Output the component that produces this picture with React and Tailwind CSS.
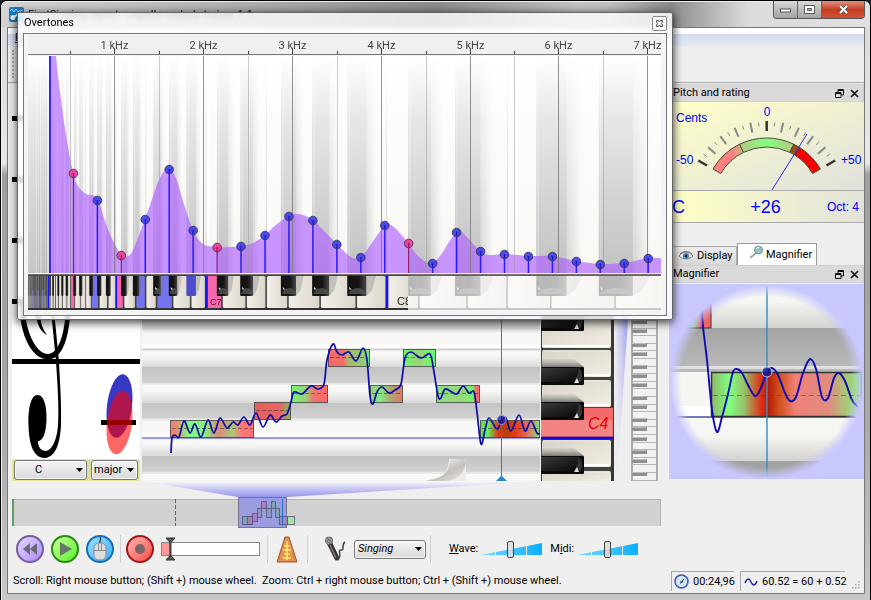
import { useState } from 'react';

const BLACK = [1, 3, 6, 8, 10];
const isBlack = (m) => BLACK.includes(m % 12);

// Harmonic amplitudes, index 0 is the second partial
const PARTIALS = [173, 200, 255, 219, 169, 230, 247, 246, 235, 216, 220, 244, 257, 225, 243, 263, 232, 251, 254, 256, 256, 261, 264, 263, 258];

const OUTLINE = [
  [56, 56], [60, 92], [66, 135], [73, 172], [78, 186], [86, 194], [97, 199], [109, 232], [121, 255], [126, 257], [133, 250],
  [145, 219], [157, 185], [164, 171], [169, 169], [176, 178], [184, 204], [193, 230], [203, 244], [217, 247], [229, 247], [241, 246],
  [253, 243], [265, 235], [277, 224], [289, 216], [296, 214], [303, 215], [313, 220], [325, 232], [337, 244], [348, 255], [356, 259],
  [361, 258], [367, 250], [385, 225], [391, 225], [398, 231], [408, 243], [418, 256], [428, 263], [433, 262], [440, 256], [456, 232],
  [463, 233], [480, 251], [490, 255], [504, 254], [528, 256], [552, 256], [576, 261], [600, 264], [624, 263], [648, 258], [661, 258],
];

const MELODY = [
  [171, 453], [172, 438], [175, 435], [179, 437], [184, 421], [190, 433], [195, 424], [201, 437], [208, 420], [214, 433],
  [220, 418], [227, 428], [233, 422], [238, 425], [244, 417], [250, 425], [256, 413], [263, 427], [270, 415], [276, 422],
  [282, 416], [287, 414], [291, 402], [294, 392], [302, 394], [311, 386], [318, 389], [324, 384], [327, 360], [333, 344],
  [337, 352], [342, 355], [349, 352], [356, 361], [363, 348], [367, 360], [370, 396], [373, 404], [377, 392], [382, 387],
  [389, 393], [395, 390], [401, 384], [405, 358], [411, 352], [421, 358], [430, 354], [434, 372], [438, 396], [441, 398],
  [445, 389], [452, 392], [457, 394], [463, 386], [469, 393], [474, 392], [477, 412], [481, 444], [485, 430], [489, 418],
  [497, 429], [502, 420], [506, 418], [511, 431], [519, 415], [525, 431], [531, 421], [537, 433], [540, 434],
];

const MAGNIFIED = [
  [33, 26], [34, 43], [38, 76], [43, 126], [48, 148], [53, 133], [59, 110], [64, 88], [68, 85], [73, 89], [79, 101], [86, 112],
  [91, 106], [98, 89], [103, 84], [109, 91], [116, 109], [121, 117], [127, 113], [134, 89], [141, 75], [147, 85], [153, 113],
  [159, 114], [165, 94], [170, 89], [176, 97], [183, 116], [189, 123],
];

const NOTES = [
  { x: 170, w: 84, y: 420, stops: [[0, '#ff7878'], [0.08, '#e09070'], [0.22, '#80ff80'], [0.42, '#88f080'], [0.58, '#e08878'], [0.75, '#a8c878'], [0.85, '#ff7878'], [1, '#ff7070']] },
  { x: 254, w: 37, y: 402, stops: [[0, '#e86060'], [0.7, '#e86464'], [0.9, '#a0a060'], [1, '#90b060']] },
  { x: 291, w: 37, y: 385, stops: [[0, '#70f870'], [0.4, '#98d078'], [0.6, '#f07870'], [1, '#ff6868']] },
  { x: 328, w: 42, y: 349, stops: [[0, '#f86868'], [0.38, '#f07068'], [0.48, '#a8b870'], [0.8, '#98c870'], [1, '#70e870']] },
  { x: 370, w: 33, y: 385, stops: [[0, '#90d078'], [0.3, '#80f080'], [0.6, '#b0a870'], [1, '#e07868']] },
  { x: 403, w: 33, y: 349, stops: [[0, '#68f868'], [0.5, '#a0d078'], [0.8, '#70f870'], [1, '#70f070']] },
  { x: 436, w: 44, y: 385, stops: [[0, '#88e080'], [0.6, '#98d878'], [0.85, '#70f870'], [0.9, '#f07070'], [1, '#ff6868']] },
  { x: 480, w: 60, y: 420, stops: [[0, '#70d060'], [0.12, '#60f860'], [0.3, '#d83818'], [0.45, '#b84008'], [0.6, '#e83818'], [0.8, '#e07060'], [1, '#88e078']] },
];

// Catmull-Rom spline through the points
function spline(points) {
  let d = `M${points[0][0]} ${points[0][1]}`;
  for (let i = 0; i < points.length - 1; i++) {
    const p0 = points[i - 1] || points[i];
    const p1 = points[i];
    const p2 = points[i + 1];
    const p3 = points[i + 2] || p2;
    d += ` C${p1[0] + (p2[0] - p0[0]) / 6} ${p1[1] + (p2[1] - p0[1]) / 6} ${p2[0] - (p3[0] - p1[0]) / 6} ${p2[1] - (p3[1] - p1[1]) / 6} ${p2[0]} ${p2[1]}`;
  }
  return d;
}

const freqX = (hz) => 25.5 + hz * 0.0888;
const midiX = (m) => freqX(440 * Math.pow(2, (m - 69) / 12));

const RANGE = Array.from({ length: 97 }, (_, i) => i + 21);
const PINK_KEYS = [72, 84, 96];
const BLUE_KEYS = [79, 88, 91, 94];

function whiteKeySpan(m) {
  return [isBlack(m - 1) ? midiX(m - 1) : midiX(m - 0.5), isBlack(m + 1) ? midiX(m + 1) : midiX(m + 0.5)];
}

function OvertoneChart() {
  const outline = spline(OUTLINE);
  return (
    <svg className="block w-[633px] h-[276px]" viewBox="28 35 633 276" role="img" aria-label="Overtone spectrum">
      <defs>
        <linearGradient id="fade" x1="0" y1="0" x2="0" y2="1">
          <stop offset="0" stopColor="#fff" />
          <stop offset=".3" stopColor="#fff" stopOpacity=".6" />
          <stop offset="1" stopColor="#fff" stopOpacity="0" />
        </linearGradient>
        <linearGradient id="stripeShadow" x1="0" y1="0" x2="1" y2="0">
          <stop offset="0" stopColor="#777" stopOpacity=".28" />
          <stop offset="1" stopColor="#777" stopOpacity="0" />
        </linearGradient>
        <linearGradient id="whiteKey" x1="0" y1="0" x2="1" y2="0">
          <stop offset="0" stopColor="#f3f0e9" />
          <stop offset="1" stopColor="#dbd6ca" />
        </linearGradient>
        <linearGradient id="blackKey" x1="0" y1="0" x2="1" y2="0">
          <stop offset="0" stopColor="#111" />
          <stop offset=".6" stopColor="#161616" />
          <stop offset="1" stopColor="#4a4a4a" />
        </linearGradient>
        <clipPath id="plot"><rect x="28" y="56" width="633" height="217" /></clipPath>
      </defs>

      <rect x="28" y="35" width="633" height="19" fill="#f0f0f0" />
      <rect x="28" y="56" width="633" height="217" fill="#f9f8f5" />
      <g clipPath="url(#plot)">
        {RANGE.filter(isBlack).map((m) => {
          const a = midiX(m - 0.5);
          const w = midiX(m + 0.5) - a;
          return (
            <g key={m}>
              <rect x={a} y="56" width={w} height="217" fill="#c2c2c2" />
              <rect x={a + w} y="56" width={w * 0.5} height="217" fill="url(#stripeShadow)" />
              <path d={`M${a + 2} 56V273`} stroke="#fff" strokeOpacity=".35" />
            </g>
          );
        })}
        {RANGE.filter((m) => m > 60 && (m % 12 === 0 || m % 12 === 5)).map((m) => (
          <g key={m}>
            <path d={`M${midiX(m - 0.5)} 56V273`} stroke="#aaa" strokeOpacity=".5" />
            <path d={`M${midiX(m - 0.5) + 2} 56V273`} stroke="#fff" strokeWidth="2" />
          </g>
        ))}
        <rect x="28" y="56" width="21" height="217" fill="#999" opacity=".35" />
        <rect x="28" y="56" width="633" height="217" fill="url(#fade)" />
        <path d={`${outline} L661 273 L49 273 L49 56 Z`} fill="#aa5dff" fillOpacity=".64" />
      </g>

      {/* Frequency axis */}
      <path d="M28 54.5H661" stroke="#777" />
      {[1, 2, 3, 4, 5, 6, 7].map((k) => {
        const x = Math.round(freqX(k * 1000)) + 0.5;
        return (
          <g key={k}>
            <path d={`M${x} 48V54`} stroke="#444" />
            <path d={`M${x} 56V273`} stroke="#777" strokeOpacity=".8" />
            <path d={`M${x - 44} 51V54`} stroke="#444" />
            <path d={`M${x - 44} 56V273`} stroke="#999" strokeOpacity=".5" />
            <text x={x} y="49" textAnchor="middle" fontSize="11" fill="#444">{k} kHz</text>
          </g>
        );
      })}

      <path d="M50 56V273" stroke="#3a28f0" strokeWidth="2" />
      {PARTIALS.map((y, i) => {
        const n = i + 2;
        const x = 25.5 + 23.95 * n;
        const pink = [2, 4, 8, 16].includes(n);
        return (
          <g key={n}>
            <path d={`M${x} ${y}V273`} stroke={pink ? '#8c0a52' : '#2b1cf5'} strokeWidth={pink ? 1 : 1.5} />
            <circle cx={x} cy={y + 0.5} r="4.3" fill={pink ? '#f0359a' : '#3d3df0'} fillOpacity=".92" stroke="#333" strokeOpacity=".8" />
            <path d={`M${x} ${y}v4`} stroke={pink ? '#8c0a52' : '#1818b0'} />
          </g>
        );
      })}

      {/* Keyboard on the linear frequency scale */}
      <rect x="28" y="275" width="633" height="35" fill="#444" />
      {RANGE.filter((m) => !isBlack(m)).map((m) => {
        const [a, b] = whiteKeySpan(m);
        const w = b - a;
        let fill = 'url(#whiteKey)';
        if (PINK_KEYS.includes(m)) fill = '#f768ab';
        if (BLUE_KEYS.includes(m)) fill = '#7474ee';
        return <rect key={m} x={a + 0.4} y="276" width={Math.max(w - (w > 8 ? 1.6 : 0.8), 0.6)} height="32" rx={w > 10 ? 1.5 : 0} fill={fill} />;
      })}
      {RANGE.filter(isBlack).map((m) => {
        const a = midiX(m - 0.5);
        const w = midiX(m + 0.5) - a;
        const blue = BLUE_KEYS.includes(m);
        return (
          <g key={m}>
            {w > 5 && <path d={`M${a + w} 276h${w * 0.5}l${-w * 0.2} 14l${-w * 0.3} 6z`} fill="#777" fillOpacity=".35" />}
            <rect x={a} y="275" width={w} height="21" rx="1" fill={blue ? '#4c4ccc' : 'url(#blackKey)'} />
            {w > 7 && !blue && <path d={`M${a + 1} 294q${w * 0.15} -6 ${w / 2} -6t${w / 2 - 1} 6z`} fill="#555" fillOpacity=".75" />}
            {w > 7 && !blue && <path d={`M${a + 2} 287l2.500 2.500l-2.500 0z`} fill="#ddd" />}
          </g>
        );
      })}
      <rect x="28" y="275" width="21" height="34" fill="#555" fillOpacity=".55" />
      <path d="M33 290V309M38 290V309M43 290V309" stroke="#7c7cd8" />
      {[60, 84, 96, 108].map((m) => (
        <path key={m} d={`M${midiX(m - 0.5) + 0.5} 276V309`} stroke="#1414f0" strokeWidth={m > 84 ? 2.5 : 1.5} />
      ))}
      <text x="210" y="305" fontSize="9" fill="#5a0f38" fontFamily="Liberation Sans, sans-serif">C7</text>
      <clipPath id="lastKey"><rect x="387" y="275" width="21" height="34" /></clipPath>
      <text x="397" y="305" fontSize="11" fill="#222" fontFamily="Liberation Sans, sans-serif" clipPath="url(#lastKey)">C8</text>
      <rect x="408" y="275" width="253" height="35" fill="#fff" fillOpacity=".7" />
      <path d="M28 275H661" stroke="#444" strokeWidth="1.5" />
      <path d="M28 309H408" stroke="#333" strokeWidth="2" />
    </svg>
  );
}

function Staff() {
  return (
    <svg className="block w-full h-[376px] bg-white" viewBox="12 83 128 376" role="img" aria-label="Staff">
      {[116, 177, 238, 299, 359].map((y) => <rect key={y} x="12" y={y} width="128" height="5" />)}
      <path d="M20.500 300L20.700 320C24 342 34 359 48 359.500C62 359 70 340 71 300H66C66 335 58 354 48 354C38 354 29 338 26 320L24 300z" />
      <path d="M35 310C37 326 41 332 47 335C42 328 40 322 40 310z" />
      <path d="M51 310L56 362C58 390 59 410 58 425C57 440 52 450 46 451C41 451 38 447 38 441C43 441 46 433 46.500 420C47 406 44 395 37.500 395C31 395 28 408 28.500 425C29 446 34 458 45 458C55 457 60 445 61 425C61.500 400 60 385 59 362L54 310z" />
      <ellipse cx="119.500" cy="406" rx="12.500" ry="32" fill="#3737c3" transform="rotate(7 119.500 406)" />
      <rect x="101" y="420" width="35" height="5" />
      <ellipse cx="119.500" cy="422.500" rx="12.500" ry="32" fill="#f00" fillOpacity=".6" transform="rotate(7 119.500 422.500)" />
    </svg>
  );
}

function PitchGrid() {
  const rows = Array.from({ length: 24 }, (_, i) => 57 + i);
  return (
    <svg className="block flex-1 min-w-0 h-[398px]" viewBox="142 83 398 398" preserveAspectRatio="none" role="img" aria-label="Melody">
      <defs>
        <linearGradient id="darkRow" x1="0" y1="0" x2="0" y2="1">
          <stop offset="0" stopColor="#c2c2c2" />
          <stop offset="1" stopColor="#d4d4d4" />
        </linearGradient>
        <linearGradient id="shadeRow" x1="0" y1="0" x2="0" y2="1">
          <stop offset="0" stopColor="#fbfbfa" />
          <stop offset=".4" stopColor="#f5f5f4" />
          <stop offset="1" stopColor="#d9d9d9" />
        </linearGradient>
        <linearGradient id="curl" x1="0" y1="0" x2="1" y2="1">
          <stop offset="0" stopColor="#fff" stopOpacity=".8" />
          <stop offset=".6" stopColor="#c4c0bc" />
          <stop offset="1" stopColor="#eee" />
        </linearGradient>
        {NOTES.map((n, i) => (
          <linearGradient key={n.x} id={`note${i}`} x1="0" y1="0" x2="1" y2="0">
            {n.stops.map(([o, c]) => <stop key={o} offset={o} stopColor={c} />)}
          </linearGradient>
        ))}
      </defs>
      <rect x="142" y="83" width="398" height="398" fill="#f8f7f5" />
      {rows.map((m) => {
        const y = 438 - 17.75 * (m - 59);
        const dark = isBlack(m);
        const shaded = !dark && isBlack(m - 1);
        return (
          <g key={m}>
            <rect x="142" y={y} width="398" height="17.750" fill={dark ? 'url(#darkRow)' : shaded ? 'url(#shadeRow)' : '#f8f7f5'} />
            {dark && <path d={`M142 ${y + 17}H540`} stroke="#e9e9e9" strokeWidth="2" />}
            {!dark && !shaded && <path d={`M142 ${y + 15}H540`} stroke="#fff" strokeWidth="4" />}
            {!dark && !shaded && <path d={`M142 ${y + 18}H540`} stroke="#cfcfcf" strokeWidth="2" />}
          </g>
        );
      })}
      <path d="M425 459H466V481H425C438 480 448 477 449 459z" fill="#eeedeb" />
      <path d="M424 481C442 478 449 475 450 459H466C466 472 459 480 446 481z" fill="url(#curl)" />
      <path d="M142 438H540" stroke="#9a9aea" strokeWidth="2" />
      {NOTES.map((n, i) => (
        <g key={n.x}>
          <rect x={n.x + 0.5} y={n.y + 0.5} width={n.w - 1} height="17" fill={`url(#note${i})`} stroke="#333" strokeOpacity=".75" />
          <path d={`M${n.x + 2} ${n.y + 8.5}h${n.w - 4}`} stroke="#333" strokeOpacity=".55" strokeDasharray="4 2" />
        </g>
      ))}
      <path d={spline(MELODY)} fill="none" stroke="#0a0aa8" strokeWidth="1.700" />
      <path d="M501.500 83V478" stroke="#2c7fb8" />
      <path d="M496 481l5.500 -5.500l5.500 5.500z" fill="#2a86c8" />
      <circle cx="501.500" cy="420" r="4.500" fill="#10108c" fillOpacity=".75" stroke="#9a9af0" />
    </svg>
  );
}

function PianoColumn() {
  const blackTops = [100, 118, 153, 171, 189, 242, 260, 277, 313, 367, 402, 456];
  const joints = [349, 378, 408, 469];
  return (
    <svg className="block w-[73px] h-[398px]" viewBox="541 83 73 398" role="img" aria-label="Piano keyboard">
      <defs>
        <linearGradient id="ivory" x1="0" y1="0" x2="1" y2="1">
          <stop offset="0" stopColor="#d8d3c6" />
          <stop offset="1" stopColor="#f1eee4" />
        </linearGradient>
        <linearGradient id="ebony" x1="0" y1="0" x2="1" y2="1">
          <stop offset="0" stopColor="#3a3a3a" />
          <stop offset="1" stopColor="#080808" />
        </linearGradient>
        <linearGradient id="keyShade" x1="0" y1="0" x2="0" y2="1">
          <stop offset="0" stopColor="#888" stopOpacity=".1" />
          <stop offset="1" stopColor="#555" stopOpacity=".75" />
        </linearGradient>
      </defs>
      <rect x="541" y="83" width="73" height="398" fill="#444" />
      {[319, 350, 380, 410, 440, 471].map((y, i) => {
        const h = [29, 27, 27, 27, 27, 12][i];
        return (
          <g key={y}>
            <rect x="542" y={y} width="69" height={h} rx="2" fill={i === 3 ? '#f47a7a' : 'url(#ivory)'} />
            {i < 5 && i !== 3 && <path d={`M542 ${y + h - 2}H610`} stroke="#fff" strokeWidth="2" />}
            <path d={`M543 ${y + 1}H609`} stroke="#fff" strokeOpacity=".4" />
          </g>
        );
      })}
      {joints.map((y) => <path key={y} d={`M541 ${y}H612`} stroke="#444" strokeWidth="1.500" />)}
      <path d="M584 408H613V438H541V420H584z" fill="#f46a6a" />
      <rect x="541" y="420" width="71" height="16" fill="#f28484" />
      {blackTops.map((y) => (
        <g key={y}>
          <path d={`M541 ${y - 8}H574L584 ${y}H541z`} fill="url(#keyShade)" />
          <rect x="541" y={y} width="43" height="18" rx="1" fill="#0b0b0b" />
          <rect x="541" y={y + 1} width="37" height="14" fill="url(#ebony)" />
          <path d={`M578 ${y + 1}q4 1 4 8q0 5 -2 6l-5 -2q4 -6 3 -12z`} fill="#333" />
          <path d={`M574 ${y + 16}l3 -5l2 5z`} fill="#ddd" />
        </g>
      ))}
      <path d="M541 438H614" stroke="#0a0ae0" strokeWidth="2.500" />
      <path d="M612.500 83V407M612.500 440V481" stroke="#333" strokeWidth="2" />
      <text x="588" y="429" fontSize="16" fontStyle="italic" fill="#e80000" fontFamily="Liberation Sans, sans-serif">C4</text>
    </svg>
  );
}

function MiniPiano() {
  const blacks = [322, 331, 345, 354, 367, 376, 385, 398, 407, 420, 429, 439, 452, 461, 474];
  return (
    <svg className="block w-[44px] h-[398px]" viewBox="614 83 44 398" role="img" aria-label="Range">
      <defs>
        <linearGradient id="beam" x1="0" y1="0" x2="1" y2="0">
          <stop offset="0" stopColor="#8c8cf4" stopOpacity="0" />
          <stop offset="1" stopColor="#8080f4" />
        </linearGradient>
        <linearGradient id="beamFade" x1="0" y1="0" x2="0" y2="1">
          <stop offset="0" stopColor="#efefef" stopOpacity="0" />
          <stop offset="1" stopColor="#efefef" />
        </linearGradient>
      </defs>
      <path d="M614 83H630L628 320L617 481H614z" fill="url(#beam)" />
      <rect x="614" y="300" width="17" height="181" fill="url(#beamFade)" />
      <rect x="631" y="83" width="27" height="398" fill="#aaa" />
      <rect x="633" y="83" width="23" height="398" fill="#f2f2f2" />
      {Array.from({ length: 22 }, (_, i) => (
        <path key={i} d={`M633 ${Math.round(320 + i * 7.6)}.5H656`} stroke="#b5b5b5" />
      ))}
      {blacks.map((y) => (
        <g key={y}>
          <rect x="632" y={y - 2} width="15" height="4" fill="#8f8f8f" />
          <path d={`M632 ${y - 1.5}h14`} stroke="#bbb" />
        </g>
      ))}
    </svg>
  );
}

function Navigator() {
  const blocks = [
    [242, 516, 10, 8, '#6cae9e'], [247, 516, 5, 8, '#b070b8'], [252, 513, 5, 8, '#b070b8'], [257, 508, 4, 9, '#8898b8'], [261, 501, 5, 7, '#b070b8'],
    [266, 508, 5, 9, '#8898b8'], [271, 501, 4, 7, '#6cae9e'], [275, 508, 4, 9, '#6cae9e'], [279, 516, 8, 8, '#9a86c0'], [287, 516, 7, 8, '#90f090'],
  ];
  return (
    <svg className="block w-full h-12" viewBox="12 481 649 48" preserveAspectRatio="none" role="img" aria-label="Song overview">
      <defs>
        <linearGradient id="funnel" x1="0" y1="0" x2="0" y2="1">
          <stop offset="0" stopColor="#fafaf8" />
          <stop offset="1" stopColor="#9393ee" />
        </linearGradient>
      </defs>
      <path d="M142 481H540L287 497H238z" fill="url(#funnel)" />
      <rect x="12" y="499" width="649" height="27" fill="#d1d1d1" />
      <path d="M12 499.500H661M660.500 499V526" stroke="#b4b4b4" />
      <path d="M13 499V526" stroke="#3a8a3a" strokeWidth="1.500" />
      <path d="M175.500 499V526" stroke="#2a8a2a" strokeDasharray="4 2" />
      <rect x="238.500" y="497.500" width="48" height="30" fill="#9b9be0" stroke="#77778c" />
      {blocks.map(([x, y, w, h, c]) => (
        <rect key={x} x={x + 0.5} y={y + 0.5} width={w} height={h} fill={c} fillOpacity=".7" stroke="#555577" strokeOpacity=".8" />
      ))}
      <path d="M282.500 499V526" stroke="#2a6ac0" />
    </svg>
  );
}

const polar = (r, deg) => {
  const a = (deg * Math.PI) / 180;
  return [97.7 + r * Math.sin(a), 98 - r * Math.cos(a)];
};
const sector = (from, to) => {
  const [a, b, c, d] = [polar(62, from), polar(62, to), polar(53, to), polar(53, from)];
  return `M${a} A62 62 0 0 1 ${b} L${c} A53 53 0 0 0 ${d} Z`;
};

function Gauge() {
  const ticks = Array.from({ length: 21 }, (_, i) => (i - 10) * 6);
  return (
    <svg className="block w-full h-[88px]" viewBox="0 0 195 88" role="img" aria-label="Pitch deviation in cents">
      <defs>
        <linearGradient id="arcLow" x1="0" y1="0" x2="1" y2="0">
          <stop offset=".6" stopColor="#ff8080" />
          <stop offset="1" stopColor="#c8b884" />
        </linearGradient>
        <linearGradient id="arcMid" x1="0" y1="0" x2="1" y2="0">
          <stop offset="0" stopColor="#b8c880" />
          <stop offset=".5" stopColor="#80ff80" />
          <stop offset="1" stopColor="#b8c880" />
        </linearGradient>
        <linearGradient id="arcHigh" x1="0" y1="0" x2="1" y2="0">
          <stop offset="0" stopColor="#806000" />
          <stop offset="1" stopColor="#c04000" />
        </linearGradient>
      </defs>
      {ticks.map((deg) => {
        const bold = deg === 0 || Math.abs(deg) === 60;
        const major = deg % 12 === 0;
        const [x1, y1] = polar(major ? 69 : 74, deg);
        const [x2, y2] = polar(major ? 79 : 78, deg);
        return <path key={deg} d={`M${x1} ${y1}L${x2} ${y2}`} stroke={bold ? '#333' : '#888'} strokeWidth={bold ? 2.5 : major ? 2 : 1} />;
      })}
      <g stroke="#4a4a3a">
        <path d={sector(-60, -26)} fill="url(#arcLow)" />
        <path d={sector(-26, 26)} fill="url(#arcMid)" />
        <path d={sector(26, 32)} fill="url(#arcHigh)" />
        <path d={sector(32, 60)} fill="#f80000" />
      </g>
      <path d="M138 32L103 88" stroke="#2a2aff" />
      <g fill="#0000f8" fontSize="12" fontFamily="Liberation Sans, sans-serif">
        <text x="7" y="20">Cents</text>
        <text x="98" y="14" textAnchor="middle">0</text>
        <text x="7" y="62">-50</text>
        <text x="172" y="62">+50</text>
      </g>
    </svg>
  );
}

function Magnifier() {
  return (
    <svg className="block w-full aspect-square" viewBox="0 0 195 195" role="img" aria-label="Magnified melody">
      <defs>
        <radialGradient id="lens">
          <stop offset=".88" stopColor="#fff" />
          <stop offset="1" stopColor="#fff" stopOpacity="0" />
        </radialGradient>
        <mask id="lensMask"><circle cx="97.500" cy="98" r="97" fill="url(#lens)" /></mask>
        <linearGradient id="magTop" x1="0" y1="0" x2="0" y2="1">
          <stop offset=".4" stopColor="#f6f6f2" />
          <stop offset="1" stopColor="#d2d2d0" />
        </linearGradient>
        <linearGradient id="magDark" x1="0" y1="0" x2="0" y2="1">
          <stop offset="0" stopColor="#a4a4a4" />
          <stop offset="1" stopColor="#b9b9b9" />
        </linearGradient>
        <linearGradient id="magNote" x1="0" y1="0" x2="1" y2="0">
          <stop offset="0" stopColor="#90b868" />
          <stop offset=".12" stopColor="#80ff80" />
          <stop offset=".22" stopColor="#98c068" />
          <stop offset=".33" stopColor="#e03018" />
          <stop offset=".38" stopColor="#b81c08" />
          <stop offset=".45" stopColor="#d05018" />
          <stop offset=".56" stopColor="#f08078" />
          <stop offset=".78" stopColor="#e08c80" />
          <stop offset=".9" stopColor="#a8c878" />
          <stop offset="1" stopColor="#80e878" />
        </linearGradient>
        <linearGradient id="magPiece" x1="0" y1="0" x2="1" y2="0">
          <stop offset="0" stopColor="#70f070" />
          <stop offset=".55" stopColor="#98b870" />
          <stop offset=".65" stopColor="#f06060" />
        </linearGradient>
      </defs>
      <rect width="195" height="195" fill="#c8c8ff" />
      <g mask="url(#lensMask)">
        <rect width="195" height="44" fill="url(#magTop)" />
        <rect y="44" width="195" height="38" fill="url(#magDark)" />
        <rect y="82" width="195" height="3" fill="#e0e0e0" />
        <rect y="85" width="195" height="3" fill="#b8b8b8" />
        <rect y="88" width="195" height="45" fill="#f6f5f1" />
        <rect y="122" width="195" height="10" fill="#fff" />
        <rect y="134" width="195" height="43" fill="url(#magTop)" />
        <rect y="177" width="195" height="18" fill="#a2a2a2" />
        <rect y="132" width="195" height="2" fill="#7878b8" />
        <rect x="10" y="0" width="32" height="44" fill="url(#magPiece)" stroke="#333" />
        <rect x="10" y="0" width="23" height="24" fill="#c8c8ff" />
        <rect x="42.500" y="88.500" width="150" height="44" fill="url(#magNote)" stroke="#333" strokeWidth="1.500" />
        <path d="M44 111.500H192" stroke="#444" strokeOpacity=".55" strokeDasharray="5 3" />
        <path d={spline(MAGNIFIED)} fill="none" stroke="#0a0ab0" strokeWidth="1.900" />
        <path d="M98 0V195" stroke="#3c8cc4" strokeOpacity=".85" strokeWidth="1.700" />
        <circle cx="98" cy="88" r="5" fill="#10108c" fillOpacity=".75" stroke="#c0c0f0" />
      </g>
    </svg>
  );
}

function DockTitle({ children }) {
  return (
    <div className="flex h-[18px] items-center border border-[#d0d0d0] bg-[#dadada] pl-[3px] pr-1">
      <h2 className="flex-1 truncate">{children}</h2>
      <button aria-label="Float" className="mr-1.5">
        <svg className="size-[9px]" viewBox="0 0 9 9" fill="none" stroke="#111"><path d="M3 3V.500h5.500V6H6M3 1.500h5M.500 3.500h5.500V8.500H.500zM.500 4.500H6" /></svg>
      </button>
      <button aria-label="Close dock">
        <svg className="size-[9px]" viewBox="0 0 9 9" stroke="#111" strokeWidth="1.700"><path d="M1 1l7 7M8 1L1 8" /></svg>
      </button>
    </div>
  );
}

function Combo({ label, value, options, className, padding }) {
  const [current, setCurrent] = useState(value);
  return (
    <div className={`relative shrink-0 ${className}`}>
      <select
        aria-label={label}
        value={current}
        onChange={(e) => setCurrent(e.target.value)}
        className={`block h-full w-full appearance-none rounded-[3px] border border-[#777] bg-linear-to-b from-[#f4f4f4] to-[#d9d9d9] shadow-[inset_0_0_0_1px_#fafafa] ${padding}`}
      >
        {options.map((o) => <option key={o}>{o}</option>)}
      </select>
      <svg className="pointer-events-none absolute right-1 top-1/2 h-1 w-[7px] -translate-y-1/2" viewBox="0 0 7 4"><path d="M0 0h7L3.500 4z" /></svg>
    </div>
  );
}

function Volume({ id, label, value }) {
  const [level, setLevel] = useState(value);
  return (
    <>
      <label htmlFor={id} className="ml-2">{label}</label>
      <div className="relative ml-[3px] h-[18px] w-[61px]">
        <svg className="absolute inset-0 h-full w-full" viewBox="0 0 61 18">
          <defs>
            <linearGradient id={`${id}Ramp`} x1="0" y1="0" x2="1" y2="0">
              <stop offset="0" stopColor="#78d8ff" />
              <stop offset="1" stopColor="#0ab0ff" />
            </linearGradient>
          </defs>
          <path d="M0 15L61 3V15z" fill={`url(#${id}Ramp)`} />
          <path d="M14.500 2V16M30 2V16M45.500 2V16" stroke="#efefef" />
        </svg>
        <input
          id={id}
          type="range"
          value={level}
          onChange={(e) => setLevel(e.target.value)}
          className="absolute inset-0 m-0 h-full w-full appearance-none bg-transparent [&::-webkit-slider-thumb]:h-[17px] [&::-webkit-slider-thumb]:w-[7px] [&::-webkit-slider-thumb]:appearance-none [&::-webkit-slider-thumb]:rounded-[2px] [&::-webkit-slider-thumb]:border [&::-webkit-slider-thumb]:border-[#444] [&::-webkit-slider-thumb]:bg-[#dcdcdc]/80"
        />
      </div>
    </>
  );
}

function RoundButton({ label, className, children }) {
  return (
    <button aria-label={label} className={`flex size-7 shrink-0 items-center justify-center rounded-full border-2 ${className}`}>
      {children}
    </button>
  );
}

function ControlBar() {
  return (
    <div className="flex h-10 items-center pl-2">
      <div className="flex gap-[7px]">
        <RoundButton label="Rewind" className="border-[#7260a0] bg-linear-to-br from-[#e4d8ff] to-[#b088f8]">
          <svg className="h-3 w-3.5" viewBox="0 0 14 12" fill="#6a6a72"><path d="M7 0V12L0 6zM14 0V12L7 6z" /></svg>
        </RoundButton>
        <RoundButton label="Play" className="border-[#2a8a10] bg-linear-to-br from-[#c0ff90] to-[#50f010]">
          <svg className="ml-0.5 size-3.5" viewBox="0 0 14 14" fill="#687868"><path d="M1 0L13 7L1 14z" /></svg>
        </RoundButton>
        <RoundButton label="Mouse" className="border-[#1070b8] bg-linear-to-br from-[#98dcff] to-[#38b0f8]">
          <svg className="h-6 w-4" viewBox="0 0 16 24" fill="none">
            <path d="M9 7C6 4 10 3 8 0" stroke="#333" strokeWidth="1.300" />
            <path d="M2 12C2 8 4 6 8 6S14 8 14 12V17C14 21 12 23 8 23S2 21 2 17z" fill="#dedede" stroke="#888" />
            <path d="M2 13.500H14M6.500 6.500V13M9.500 6.500V13" stroke="#888" />
          </svg>
        </RoundButton>
      </div>
      <div className="ml-1.5 h-7 w-px bg-[#cfcfcf]" />
      <RoundButton label="Record" className="ml-[5px] border-[#a01818] bg-linear-to-br from-[#ffb0b0] to-[#f84848]">
        <svg className="size-2.5" viewBox="0 0 10 10"><circle cx="5" cy="5" r="5" fill="#7c6464" /></svg>
      </RoundButton>
      <div className="relative ml-[7px] h-6 w-[99px]">
        <svg className="absolute inset-0 h-full w-full" viewBox="0 0 99 24">
          <rect x=".500" y="5.500" width="98" height="13" fill="#fff" stroke="#888" />
          <rect x="1" y="6" width="7" height="12" fill="#ff9898" />
          <path d="M8.500 5V19" stroke="#777" />
          <path d="M9.500 3V21" stroke="#444" strokeWidth="2" />
          <path d="M5 1h9l-4.500 5zM5 23h9l-4.500 -5z" fill="#555" stroke="#333" />
        </svg>
        <input type="range" aria-label="Record threshold" defaultValue="9" className="absolute inset-0 m-0 h-full w-full opacity-0" />
      </div>
      <div className="ml-[7px] h-7 w-px bg-[#cfcfcf]" />
      <button aria-label="Metronome" className="ml-2">
        <svg className="h-[27px] w-[22px]" viewBox="0 0 22 27" fill="none">
          <path d="M9 1h4L21 26H1z" fill="#d8844a" stroke="#a85a28" />
          <path d="M9.500 2h3L19 25H3z" fill="#e0945c" />
          <path d="M11 5V24M8 10H14M7 14H15M8 18H14M7 22H15" stroke="#ffe860" strokeWidth="1.500" />
        </svg>
      </button>
      <div className="ml-[9px] h-7 w-px bg-[#cfcfcf]" />
      <svg className="ml-4 h-[26px] w-[22px]" viewBox="0 0 22 26" fill="none">
        <path d="M3 8L8 6L15 21C15 24 12 25 11 24z" fill="#3c3030" />
        <path d="M6 9L12 22" stroke="#857878" strokeWidth="1.500" />
        <circle cx="5" cy="4.500" r="4" fill="#77777c" />
        <path d="M2 3.500l5 3M4 1.500l4 3M2 6l3 2" stroke="#aaa" />
        <path d="M13 24C19 23 13 13 17 14C21 15 17 8 21 6" stroke="#444" strokeWidth="1.500" />
      </svg>
      <Combo label="Sound" value="Singing" options={['Singing', 'Piano']} className="ml-2 h-[19px] w-[72px] italic" padding="pl-[3px]" />
      <div className="ml-1 mr-2.5 h-7 w-px bg-[#cfcfcf]" />
      <Volume id="wave" label={<><u>W</u>ave:</>} value={47} />
      <Volume id="midi" label={<>M<u>i</u>di:</>} value={50} />
    </div>
  );
}

function StatusBar() {
  return (
    <div className="flex h-6 items-center pl-[5px]">
      <p className="flex-1 whitespace-pre">{'Scroll: Right mouse button; (Shift +) mouse wheel.  Zoom: Ctrl + right mouse button; Ctrl + (Shift +) mouse wheel.'}</p>
      <div className="mr-1.5 flex h-5 w-[63px] items-center gap-1 border-l border-t border-[#aaa] pl-0.5">
        <svg className="size-[15px] shrink-0" viewBox="0 0 15 15" fill="none">
          <circle cx="7.500" cy="7.500" r="6.500" fill="#cfe8f8" stroke="#3c58b8" strokeWidth="1.500" />
          <path d="M6.500 9.500L10 5M6 8H9" stroke="#333" />
        </svg>
        00:24,96
      </div>
      <div className="mr-[7px] flex h-5 w-[105px] items-center gap-1 border-l border-t border-[#aaa] pl-[3px]">
        <svg className="h-2 w-3.5 shrink-0" viewBox="0 0 14 8" fill="none" stroke="#1818b8" strokeWidth="1.500"><path d="M1 5C3 0 5 0 7 4S11 8 13 3" /></svg>
        <span className="whitespace-nowrap">60.52 = 60 + 0.52</span>
      </div>
      <svg className="mb-1 mr-1 size-2 self-end" viewBox="0 0 8 8" fill="#b0b0b0"><path d="M6 0h1.500v1.500H6zM6 3h1.500v1.500H6zM6 6h1.500v1.500H6zM3 3h1.500v1.500H3zM3 6h1.500v1.500H3zM0 6h1.500v1.500H0z" /></svg>
    </div>
  );
}

function Dock() {
  return (
    <aside className="w-[195px] shrink-0 pt-px">
      <DockTitle>Pitch and rating</DockTitle>
      <div className="bg-linear-to-br from-[#ffffc8] to-[#e0e0dc]">
        <Gauge />
      </div>
      <div className="grid h-[33px] grid-cols-3 items-center border-y border-[#aaa] bg-linear-to-r from-[#ffffc4] to-[#e2e2dc] pl-[3px] pr-[5px] font-['Liberation_Sans',sans-serif] text-lg text-[#0000f8]">
        <span>C</span>
        <span className="text-center">+26</span>
        <span className="text-right text-xs">Oct: 4</span>
      </div>
      <div role="tablist" className="flex h-[42px] items-end">
        <button role="tab" aria-selected="false" className="flex h-[19px] w-[68px] items-center gap-1 border border-b-0 border-[#aaa] bg-linear-to-b from-[#eee] to-[#d6d6d6] pl-[9px]">
          <svg className="h-2.5 w-3.5" viewBox="0 0 14 10">
            <path d="M0 5C4 0 10 0 14 5C10 9 4 9 0 5z" fill="#eee" stroke="#8a7468" />
            <circle cx="7" cy="5" r="3" fill="#3d8ac0" />
            <circle cx="7" cy="5" r="1.300" fill="#123" />
            <path d="M1 3C4 -.500 10 -.500 13 3" fill="none" stroke="#8a7468" />
          </svg>
          Display
        </button>
        <button role="tab" aria-selected="true" className="flex h-[22px] w-[80px] items-center gap-[3px] border border-b-0 border-[#999] bg-white pl-[11px]">
          <svg className="mb-1 h-[15px] w-3.5 shrink-0" viewBox="0 0 14 15">
            <path d="M1 13L7 8" stroke="#aaa" strokeWidth="2" />
            <circle cx="9.500" cy="5" r="4" fill="#98c4cc" stroke="#7a8c90" />
            <path d="M7.500 4C8 2.500 9 2 10 2.500" stroke="#fff" fill="none" />
          </svg>
          Magnifier
        </button>
      </div>
      <DockTitle>Magnifier</DockTitle>
      <div className="mt-px">
        <Magnifier />
      </div>
    </aside>
  );
}

function OvertonesWindow() {
  return (
    <section className="absolute left-4 top-[11px] w-[656px] rounded-[2px] border border-[#666] bg-white/80 px-[5px] pb-[3px] shadow-[0_2px_8px_1px_rgba(0,0,0,0.7)] backdrop-blur-[2px]">
      <header className="flex h-5 items-center justify-between pl-px">
        <h1>Overtones</h1>
        <button aria-label="Close overtones" className="flex size-[15px] items-center justify-center rounded-[2px] border border-[#888] bg-[#f8f8f8]">
          <svg className="size-[7px]" viewBox="0 0 7 7" fill="none" stroke="#555"><path d="M.500 .500h2l1 1.500l1 -1.500h2v2l-1.500 1l1.500 1v2h-2l-1 -1.500l-1 1.500h-2v-2l1.500 -1l-1.500 -1z" /></svg>
        </button>
      </header>
      <div className="border border-[#777] bg-[#f4f4f4] px-1 pb-1 pt-px">
        <OvertoneChart />
      </div>
    </section>
  );
}

function TitleBar() {
  return (
    <header className="flex h-[26px] items-start justify-between rounded-t-[6px] bg-[linear-gradient(to_right,#d4d4d4,#b4b4b4_25%,#8c8c8c_50%,#c4c4c4_66%,#c0c0c0_70%,#8a8a8a_77%,#dcdcdc_86%,#e0e0e0)] pl-2 pr-[5px] shadow-[inset_0_1px_0_#eee]">
      <div className="flex items-center gap-1 pt-1.5">
        <svg className="size-[15px]" viewBox="0 0 15 15" fill="none">
          <rect width="15" height="15" rx="2" fill="#1780cc" />
          <path d="M1 4l2 -2l2 3l2 -3l2 3l2 -2l3 1" stroke="#9ad8ff" />
          <circle cx="4" cy="10.500" r="2.500" fill="#fff" />
          <path d="M5 10L12 5" stroke="#fff" strokeWidth="2" />
        </svg>
        <span className="text-[11px] leading-3 text-[#111]">FirstSinging.report - capella melody trainer 1.1</span>
      </div>
      <div className="flex h-[18px] overflow-hidden rounded-b-[4px] border border-t-0 border-[#555]">
        <button aria-label="Minimize" className="flex w-6 items-center justify-center border-r border-[#666] bg-linear-to-b from-[#d8d8d8] to-[#a4a4a4]">
          <svg className="h-1.5 w-3" viewBox="0 0 12 6"><rect x=".500" y="2" width="10" height="3" fill="#fff" stroke="#555" /></svg>
        </button>
        <button aria-label="Maximize" className="flex w-6 items-center justify-center border-r border-[#666] bg-linear-to-b from-[#d8d8d8] to-[#a4a4a4]">
          <svg className="h-[9px] w-[11px]" viewBox="0 0 11 9"><path d="M.500 .500h10v8H.500zM3.500 3.500v2h4v-2z" fill="#fff" fillRule="evenodd" stroke="#555" /></svg>
        </button>
        <button aria-label="Close" className="flex w-[42px] items-center justify-center bg-linear-to-b from-[#e0907c] via-[#c43c22] to-[#d05038]">
          <svg className="size-[9px]" viewBox="0 0 9 9"><path d="M1 1l7 7M8 1L1 8" stroke="#555" strokeWidth="3.500" /><path d="M1 1l7 7M8 1L1 8" stroke="#fff" strokeWidth="2" /></svg>
        </button>
      </div>
    </header>
  );
}

export default function App() {
  return (
    <div className="bg-[#1c2024] font-['Roboto',sans-serif] text-[11px] leading-4 text-black">
      <div className="relative flex min-h-screen flex-col overflow-hidden rounded-t-[7px] border-x border-t border-black bg-[linear-gradient(to_bottom,#d8d8d8,#e8e8e8_27%,#a0a0a0_29%,#a8a8a8_70%,#c8c8c8)] pb-[6px] shadow-[inset_1px_0_0_#eee]">
        <TitleBar />
        <div className="ml-1.5 mr-[5px] flex flex-1 flex-col border border-[#777] bg-[#efefef]">
          <nav className="h-[18px] bg-linear-to-b from-white from-30% via-[#d3dcee] via-35% to-[#e4e9f6] pl-[7px]">
            <button className="leading-5"><u>F</u>ile</button>
          </nav>
          <div className="flex h-[37px] border-b border-[#a8a8a8] p-1">
            <div className="h-full border-l-2 border-dotted border-[#aaa]" />
          </div>
          <main className="flex gap-2">
            <div className="min-w-0 flex-1 pl-1">
              <div className="flex">
                <div className="w-32 shrink-0">
                  <Staff />
                  <div className="flex h-[22px] items-center gap-1 border border-[#e6e69a] bg-[#dcdca4] px-px">
                    <Combo label="Key" value="C" options={['C', 'D', 'E', 'F', 'G', 'A', 'B']} className="h-5 w-[73px]" padding="pl-5" />
                    <Combo label="Mode" value="major" options={['major', 'minor']} className="h-5 w-[47px]" padding="pl-[2px]" />
                  </div>
                </div>
                <div className="ml-0.5 flex min-w-0 flex-1">
                  <PitchGrid />
                  <div className="ml-px flex shrink-0">
                    <PianoColumn />
                    <MiniPiano />
                  </div>
                </div>
                <div className="w-[3px] shrink-0" />
              </div>
              <Navigator />
            </div>
            <Dock />
          </main>
          <ControlBar />
          <StatusBar />
        </div>
        <OvertonesWindow />
      </div>
    </div>
  );
}
